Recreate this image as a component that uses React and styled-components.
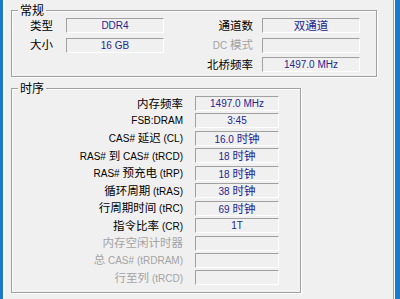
import React from 'react'
import styled, { createGlobalStyle } from 'styled-components'

const GlobalStyle = createGlobalStyle`
  html, body {
    margin: 0;
    padding: 0;
    background: #f0f0f0;
  }
  body {
    font-family: "Liberation Sans", "Noto Sans CJK SC", sans-serif;
    font-size: 10px;
    color: #000;
  }
`

const Window = styled.div`
  width: 400px;
  height: 299px;
  display: flex;
  overflow: hidden;
  background: #f0f0f0;
`
const FrameLeft = styled.div`
  width: 3px;
  flex-shrink: 0;
  background: #1979ca;
`
const FrameRight = styled.div`
  width: 5px;
  flex-shrink: 0;
  border-left: 1px solid #fff;
  background: #1979ca;
`
const TabPage = styled.div`
  flex: 1;
  border-left: 2px solid #fdfdfd;
  border-right: 1px solid #a0a0a0;
  padding: 3px 0 0 6px;
  display: flex;
  flex-direction: column;
  align-items: flex-start;
  gap: 4px;
`
const Group = styled.fieldset`
  margin: 0;
  min-width: 0;
  box-sizing: border-box;
  width: ${p => p.$w}px;
  padding: 1px 0 ${p => p.$bottom}px 0;
  border: 1px solid #a0a0a0;
  box-shadow: inset 1px 1px 0 #fff, 1px 1px 0 #fff;
`
const Legend = styled.legend`
  margin-left: 6px;
  padding: 0 2px;
  font-family: "Noto Sans CJK SC", sans-serif;
  font-size: 12px;
  line-height: 14px;
  background: #f0f0f0;
`
const GeneralGrid = styled.div`
  display: grid;
  grid-template-columns: 45px 98px 80px 98px;
  grid-template-rows: repeat(3, 15px);
  column-gap: 9px;
  row-gap: 4.5px;
`
const TimingGrid = styled.div`
  display: grid;
  grid-template-columns: 171px 84px;
  grid-auto-rows: 15px;
  column-gap: 12px;
  row-gap: 2.45px;
`
const Label = styled.div`
  display: flex;
  align-items: center;
  justify-content: flex-end;
  padding-right: ${p => p.$pr || 0}px;
  white-space: nowrap;
  line-height: 13px;
  color: ${p => (p.$off ? '#a3a3a3' : '#000')};
`
const Value = styled.div`
  box-sizing: border-box;
  height: 15px;
  border: 1px solid;
  border-color: #a0a0a0 #fff #fff #a0a0a0;
  color: #25258f;
  text-align: center;
  line-height: 13px;
  white-space: nowrap;
`
const Han = styled.span`
  font-family: "Noto Sans CJK SC", sans-serif;
  font-size: 11.5px;
`
const Blank = styled.div``

const Text = ({ children }) => (
  <span>
    {String(children)
      .split(/([\u3400-\u9fff]+)/)
      .map((part, i) =>
        /[\u3400-\u9fff]/.test(part) ? <Han key={i}>{part}</Han> : part
      )}
  </span>
)

const timings = [
  ['内存频率', '1497.0 MHz'],
  ['FSB:DRAM', '3:45'],
  ['CAS# 延迟 (CL)', '16.0 时钟'],
  ['RAS# 到 CAS# (tRCD)', '18 时钟'],
  ['RAS# 预充电 (tRP)', '18 时钟'],
  ['循环周期 (tRAS)', '38 时钟'],
  ['行周期时间 (tRC)', '69 时钟'],
  ['指令比率 (CR)', '1T'],
  ['内存空闲计时器', '', true],
  ['总 CAS# (tRDRAM)', '', true],
  ['行至列 (tRCD)', '', true],
]

const App = () => {
  return (
    <Window>
      <GlobalStyle />
      <FrameLeft />
      <TabPage>
        <Group $w={366} $bottom={4}>
          <Legend>常规</Legend>
          <GeneralGrid>
            <Label $pr={4}><Text>类型</Text></Label>
            <Value>DDR4</Value>
            <Label><Text>通道数</Text></Label>
            <Value><Text>双通道</Text></Value>

            <Label $pr={4}><Text>大小</Text></Label>
            <Value>16 GB</Value>
            <Label $off><Text>DC 模式</Text></Label>
            <Value />

            <Blank />
            <Blank />
            <Label><Text>北桥频率</Text></Label>
            <Value>1497.0 MHz</Value>
          </GeneralGrid>
        </Group>
        <Group $w={290} $bottom={7}>
          <Legend>时序</Legend>
          <TimingGrid>
            {timings.map(([label, value, off]) => (
              <React.Fragment key={label}>
                <Label $off={off}><Text>{label}</Text></Label>
                <Value><Text>{value}</Text></Value>
              </React.Fragment>
            ))}
          </TimingGrid>
        </Group>
      </TabPage>
      <FrameRight />
    </Window>
  )
}

export default App
